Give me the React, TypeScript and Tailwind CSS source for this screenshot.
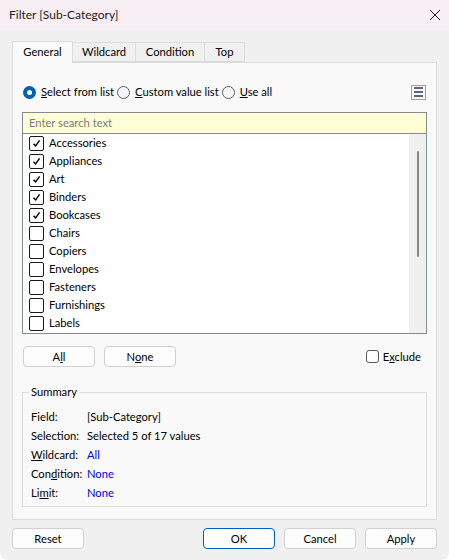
import React from 'react';

const items = [
  { name: 'Accessories', on: true },
  { name: 'Appliances', on: true },
  { name: 'Art', on: true },
  { name: 'Binders', on: true },
  { name: 'Bookcases', on: true },
  { name: 'Chairs', on: false },
  { name: 'Copiers', on: false },
  { name: 'Envelopes', on: false },
  { name: 'Fasteners', on: false },
  { name: 'Furnishings', on: false },
  { name: 'Labels', on: false },
];

function Check({ on, small }: { on: boolean; small?: boolean }) {
  return (
    <span
      className={
        small
          ? 'w-[13px] h-[13px] border border-[#5a5a5a] rounded-[3px] bg-white inline-flex items-center justify-center'
          : 'w-[15px] h-[15px] border border-[#1a1a1a] rounded-[2px] bg-white inline-flex items-center justify-center'
      }
    >
      {on && (
        <svg width="11" height="11" viewBox="0 0 11 11">
          <path d="M2.5 5.8 L4.6 8 L8.6 2.3" fill="none" stroke="#000" strokeWidth="1.4" />
        </svg>
      )}
    </span>
  );
}

function Radio({ on }: { on: boolean }) {
  return on ? (
    <span className="w-[13px] h-[13px] rounded-full bg-[#005fb8] inline-flex items-center justify-center">
      <span className="w-[5px] h-[5px] rounded-full bg-white" />
    </span>
  ) : (
    <span className="w-[13px] h-[13px] rounded-full border border-[#5e5e5e] bg-[#f6f6f6] inline-block" />
  );
}

function Btn({ children, primary }: { children: React.ReactNode; primary?: boolean }) {
  return (
    <button
      className={
        'w-[72px] h-[21px] rounded-[4px] bg-[#fdfdfd] text-black flex items-center justify-center border ' +
        (primary ? 'border-[#005fb8]' : 'border-[#d0d0d0]')
      }
    >
      {children}
    </button>
  );
}

export default function App() {
  return (
    <div
      className="w-[449px] h-[560px] bg-[#f0f0f0] text-[11.2px] leading-[16px] text-black flex flex-col overflow-hidden rounded-b-[8px]"
      style={{ fontFamily: '"Segoe UI", Lato, sans-serif' }}
    >
      <div className="h-[30px] bg-[#f8eff4] flex items-center justify-between pl-[9px] pr-[8px]">
        <span className="text-[12px] text-[#1a1a1a]">Filter [Sub-Category]</span>
        <svg width="12" height="12" viewBox="0 0 12 12">
          <path d="M1 1 L11 11 M11 1 L1 11" stroke="#1a1a1a" strokeWidth="1" fill="none" />
        </svg>
      </div>

      <div className="px-[12px] pt-[10px]">
        <div className="flex items-end h-[22px]">
          <div className="w-[61px] h-[22px] bg-[#f9f9f9] border border-b-0 border-[#dcdcdc] flex items-center justify-center relative z-10 -mb-px pb-[2px]">
            General
          </div>
          <div className="w-[63px] h-[20px] bg-[#f0f0f0] border border-l-0 border-[#dcdcdc] flex items-center justify-center">
            Wildcard
          </div>
          <div className="w-[69px] h-[20px] bg-[#f0f0f0] border border-l-0 border-[#dcdcdc] flex items-center justify-center">
            Condition
          </div>
          <div className="w-[40px] h-[20px] bg-[#f0f0f0] border border-l-0 border-[#dcdcdc] flex items-center justify-center">
            Top
          </div>
        </div>

        <div className="h-[458px] bg-[#f9f9f9] border border-[#dcdcdc] px-[9px] flex flex-col">
          <div className="mt-[20px] h-[18px] flex items-center justify-between">
            <div className="flex items-center">
              <span className="ml-[1px] flex"><Radio on /></span>
              <span className="ml-[5px]"><u>S</u>elect from list</span>
              <span className="ml-[3px] flex"><Radio on={false} /></span>
              <span className="ml-[5px]"><u>C</u>ustom value list</span>
              <span className="ml-[3px] flex"><Radio on={false} /></span>
              <span className="ml-[5px]"><u>U</u>se all</span>
            </div>
            <div className="w-[15px] h-[15px] border border-[#a0a0a0] bg-[#f6f6f6] flex flex-col items-center justify-center gap-[2px] mr-[1px]">
              <span className="w-[9px] h-[2px] bg-[#5d6880]" />
              <span className="w-[9px] h-[2px] bg-[#5d6880]" />
              <span className="w-[9px] h-[2px] bg-[#5d6880]" />
            </div>
          </div>

          <div className="mt-[11px] border border-[#868a91]">
            <div className="h-[21px] bg-[#ffffd7] border-b border-[#868a91] flex items-center pl-[6px] text-[#7a7a7a]">
              Enter search text
            </div>
            <div className="h-[199px] bg-white flex">
              <div className="flex-1 pl-[6px] flex flex-col">
                {items.map((it) => (
                  <div key={it.name} className="h-[18px] flex items-center">
                    <Check on={it.on} />
                    <span className="ml-[5px]">{it.name}</span>
                  </div>
                ))}
              </div>
              <div className="w-[17px] bg-[#f0f0f0] pt-[17px] flex justify-center">
                <div className="w-[2px] h-[106px] bg-[#8a8a8a] rounded-full" />
              </div>
            </div>
          </div>

          <div className="mt-[12px] flex items-center justify-between">
            <div className="flex gap-[9px] ml-[1px]">
              <Btn>A<u>l</u>l</Btn>
              <Btn>N<u>o</u>ne</Btn>
            </div>
            <div className="flex items-center mr-[6px]">
              <Check on={false} small />
              <span className="ml-[4px]">E<u>x</u>clude</span>
            </div>
          </div>

          <div className="mt-[25px] h-[115px] border border-[#dcdcdc] relative px-[8px] pt-[14px]">
            <span className="absolute -top-[9px] left-[6px] bg-[#f9f9f9] px-[2px]">Summary</span>
            <div className="grid grid-cols-[56px_1fr] auto-rows-[19px] items-center">
              <span>Field:</span>
              <span>[Sub-Category]</span>
              <span>Selection:</span>
              <span>Selected 5 of 17 values</span>
              <span><u>W</u>ildcard:</span>
              <span className="text-[#0000ff]">All</span>
              <span>Con<u>d</u>ition:</span>
              <span className="text-[#0000ff]">None</span>
              <span>Li<u>m</u>it:</span>
              <span className="text-[#0000ff]">None</span>
            </div>
          </div>
        </div>

        <div className="mt-[8px] flex items-center">
          <Btn>Reset</Btn>
          <div className="ml-auto flex gap-[9px]">
            <Btn primary>OK</Btn>
            <Btn>Cancel</Btn>
            <Btn>Apply</Btn>
          </div>
        </div>
      </div>
    </div>
  );
}
